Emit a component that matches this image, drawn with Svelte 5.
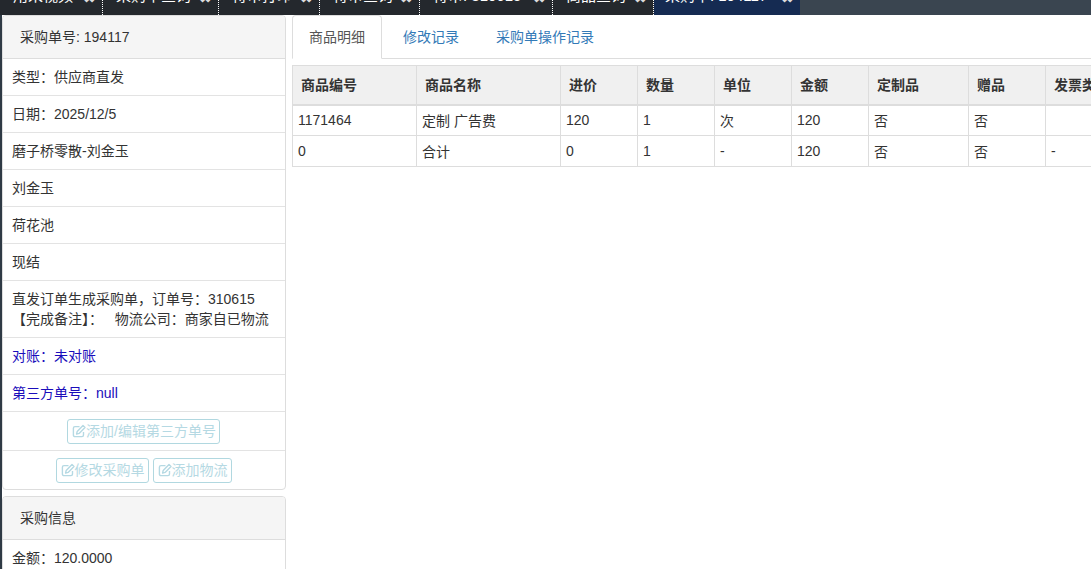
<script>
  const openTabs = [
    { name: "用来视频" },
    { name: "采购单查询" },
    { name: "待审打印" },
    { name: "待审查询" },
    { name: "待审: 310615" },
    { name: "商品查询" },
    { name: "采购单: 194117", active: true },
  ];
  // full-width punctuation, written as escapes so it stays full-width
  const c = "\uFF1A";
  const infoRows = [
    { text: `类型${c}供应商直发` },
    { text: `日期${c}2025/12/5` },
    { text: "磨子桥零散-刘金玉" },
    { text: "刘金玉" },
    { text: "荷花池" },
    { text: "现结" },
    { text: `直发订单生成采购单\uFF0C订单号${c}310615\n【完成备注】${c}\u00A0\u00A0 物流公司${c}商家自已物流` },
    { text: `对账${c}未对账`, blue: true },
    { text: `第三方单号${c}null`, blue: true },
  ];
  const columns = ["商品编号", "商品名称", "进价", "数量", "单位", "金额", "定制品", "赠品", "发票类型"];
  const rows = [
    ["1171464", "定制 广告费", "120", "1", "次", "120", "否", "否", ""],
    ["0", "合计", "0", "1", "-", "120", "否", "否", "-"],
  ];
</script>

{#snippet editIcon()}
  <svg class="icon" viewBox="0 0 14 14" width="14" height="14" aria-hidden="true">
    <path d="M11.5 8v3a1.6 1.6 0 0 1-1.6 1.6H3A1.6 1.6 0 0 1 1.4 11V4.2A1.6 1.6 0 0 1 3 2.6h4.5" fill="none" stroke="currentColor" stroke-width="1.4" />
    <path d="M5.2 7.4 11 1.4l2 2-5.9 6-2.5.6z" fill="none" stroke="currentColor" stroke-width="1.4" stroke-linejoin="round" />
  </svg>
{/snippet}

<div class="page">
  <nav class="topbar">
    {#each openTabs as t}
      <div class="toptab" class:active={t.active}>
        <span>{t.name}</span><span class="close">✖</span>
      </div>
    {/each}
  </nav>

  <div class="body">
    <div class="rail"></div>

    <aside class="side">
      <section class="panel">
        <header class="panel-head">采购单号: 194117</header>
        {#each infoRows as r}
          <div class="row" class:blue={r.blue}>{r.text}</div>
        {/each}
        <div class="row actions">
          <button class="btn" disabled>{@render editIcon()}添加/编辑第三方单号</button>
        </div>
        <div class="row actions last">
          <button class="btn" disabled>{@render editIcon()}修改采购单</button>
          <button class="btn" disabled>{@render editIcon()}添加物流</button>
        </div>
      </section>

      <section class="panel">
        <header class="panel-head">采购信息</header>
        <div class="row">金额{c}120.0000</div>
      </section>
    </aside>

    <main class="content">
      <ul class="tabs">
        <li class="tab current">商品明细</li>
        <li class="tab">修改记录</li>
        <li class="tab">采购单操作记录</li>
      </ul>

      <table class="grid">
        <thead>
          <tr>
            {#each columns as col}<th>{col}</th>{/each}
          </tr>
        </thead>
        <tbody>
          {#each rows as row}
            <tr>
              {#each row as cell}<td>{cell}</td>{/each}
            </tr>
          {/each}
        </tbody>
      </table>
    </main>
  </div>
</div>

<style>
  :global(body) {
    margin: 0;
    background: #fff;
  }
  .page {
    width: 1091px;
    height: 569px;
    overflow: hidden;
    font-family: "Liberation Sans", "Noto Sans CJK SC", sans-serif;
    font-size: 14px;
    color: #333;
  }

  .topbar {
    display: grid;
    grid-template-columns: 103px 116px 101px 100px 133px 101px 146px 1fr;
    height: 15px;
    overflow: hidden;
    background: #3a4550;
  }
  .toptab {
    display: flex;
    align-items: flex-end;
    justify-content: space-between;
    height: 15px;
    padding: 0 6px 11px 13px;
    box-sizing: border-box;
    background: #24282d;
    color: #fff;
    font-size: 15px;
    line-height: 16px;
    white-space: nowrap;
    border-right: 1px dotted #fff;
  }
  .toptab.active {
    padding-left: 11px;
    background: #152b52;
    border-right: 0;
  }
  .close {
    margin-bottom: -2px;
    width: 13px;
    font-size: 15px;
    color: #ddd;
  }

  .body {
    display: flex;
  }
  .rail {
    flex: none;
    width: 2px;
    height: 554px;
    background: #2f3a45;
  }
  .side {
    flex: none;
    width: 284px;
    display: flex;
    flex-direction: column;
    gap: 6px;
  }
  .panel {
    border: 1px solid #ddd;
    border-radius: 4px;
    overflow: hidden;
  }
  .panel-head {
    height: 43px;
    box-sizing: border-box;
    padding-left: 17px;
    line-height: 42px;
    background: #f5f5f5;
    border-bottom: 1px solid #ddd;
  }
  .row {
    padding: 8px 9px;
    line-height: 20px;
    white-space: pre-line;
    border-bottom: 1px solid #e3e3e3;
  }
  .row.blue {
    color: #1a0dbb;
  }
  .actions {
    display: flex;
    justify-content: center;
    gap: 4px;
    padding: 7px 1px 6px 0;
  }
  .actions.last {
    border-bottom: 0;
  }
  .btn {
    display: flex;
    align-items: center;
    height: 25px;
    padding: 0 3px 2px 4px;
    font: inherit;
    line-height: 18px;
    color: #b5d9e3;
    background: #fff;
    border: 1px solid #b1d8e0;
    border-radius: 3px;
  }
  .icon {
    flex: none;
    color: #b5d9e3;
  }

  .content {
    flex: none;
    width: 799px;
    margin-left: 6px;
    overflow: hidden;
  }
  .tabs {
    display: flex;
    margin: 0 0 6px;
    padding: 0;
    list-style: none;
    border-bottom: 1px solid #ddd;
  }
  .tab {
    height: 42px;
    margin-bottom: -1px;
    margin-right: 3px;
    padding: 0 16px;
    line-height: 43px;
    color: #337ab7;
    border: 1px solid transparent;
    border-bottom: 1px solid transparent;
  }
  .tab.current {
    margin-right: 4px;
    color: #555;
    background: #fff;
    border: 1px solid #ddd;
    border-bottom: 1px solid #fff;
    border-radius: 4px 4px 0 0;
  }

  .grid {
    table-layout: fixed;
    width: 853px;
    border-collapse: collapse;
  }
  th, td {
    box-sizing: border-box;
    border: 1px solid #ddd;
    text-align: left;
    white-space: nowrap;
    overflow: hidden;
  }
  th {
    height: 39px;
    padding: 0 0 2px 8px;
    font-weight: 700;
    background: #f0f0f0;
    border-bottom: 2px solid #ddd;
  }
  td {
    height: 31px;
    padding: 0 0 0 5px;
  }
  th:nth-child(1) { width: 124px; }
  th:nth-child(2) { width: 144px; }
  th:nth-child(3),
  th:nth-child(4),
  th:nth-child(5),
  th:nth-child(6) { width: 77px; }
  th:nth-child(7) { width: 100px; }
  th:nth-child(8) { width: 77px; }
  th:nth-child(9) { width: 100px; }
</style>
